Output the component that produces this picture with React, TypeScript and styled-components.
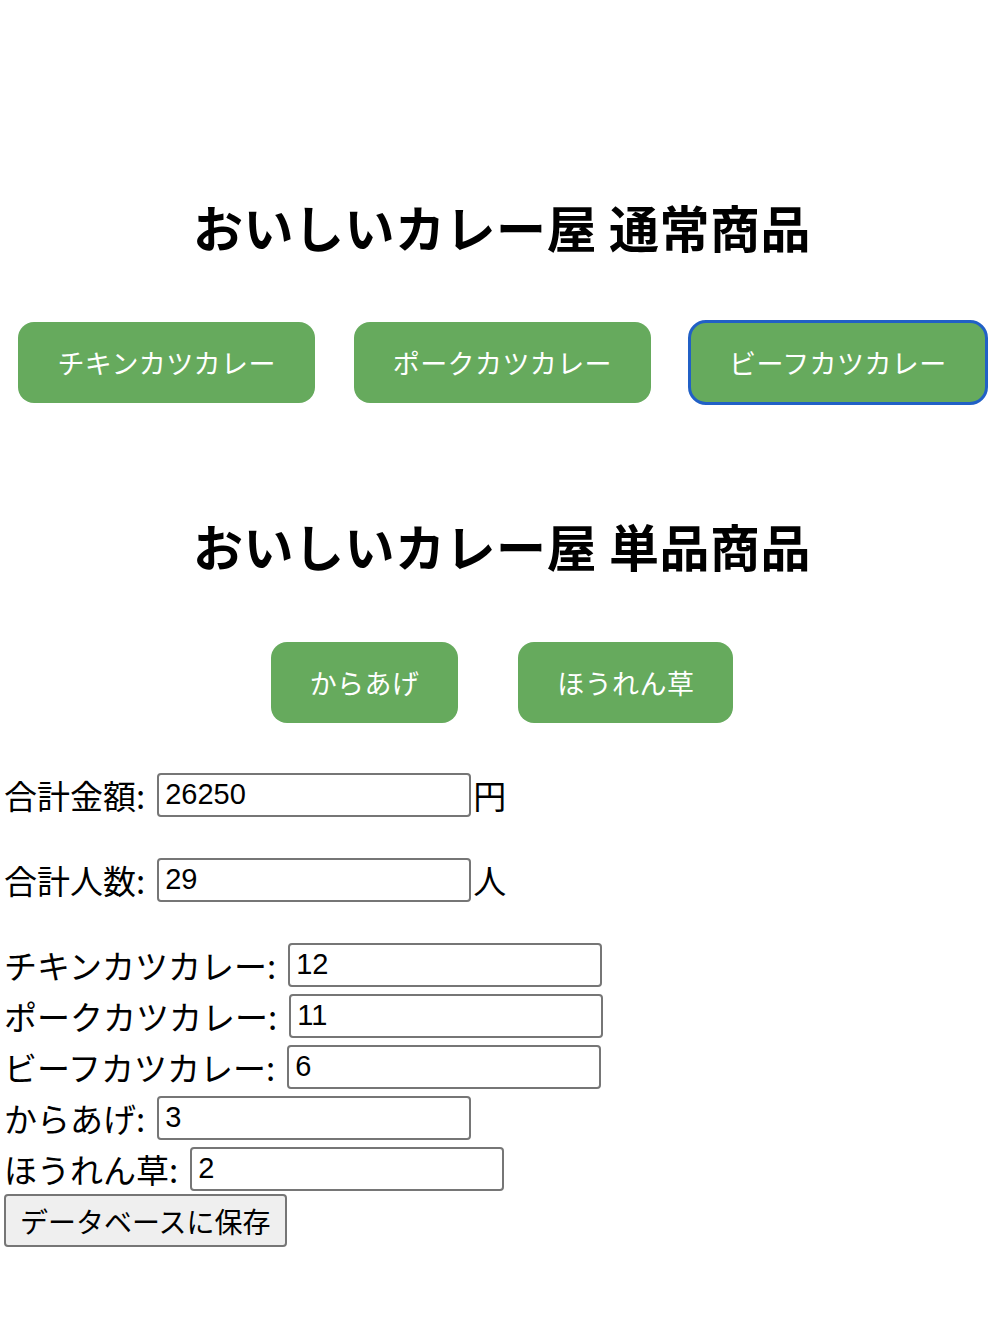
import React, { useState } from 'react';
import styled, { createGlobalStyle } from 'styled-components';

const GlobalStyle = createGlobalStyle`
    body {
        margin: 0;
        background: #ffffff;
        color: #000000;
        font-family: "Liberation Sans", "Noto Sans CJK JP", sans-serif;
    }
`;

const Page = styled.div`
    padding: 191px 0 40px 4px;
    box-sizing: border-box;
`;

const Heading = styled.h2`
    margin: 0;
    text-align: center;
    font-family: "Noto Sans CJK JP", sans-serif;
    font-size: 50px;
    font-weight: 700;
    line-height: 70px;
    letter-spacing: 0.5px;
`;

const ButtonRow = styled.div<{ $gap: number; $top: number; $bottom: number }>`
    display: flex;
    justify-content: center;
    gap: ${p => p.$gap}px;
    margin: ${p => p.$top}px 0 ${p => p.$bottom}px;
`;

const MenuButton = styled.button<{ $focused?: boolean }>`
    height: 81px;
    padding: 0 39px;
    border: none;
    border-radius: 16px;
    background: #66aa5d;
    color: #ffffff;
    font-family: "Noto Sans CJK JP", sans-serif;
    font-size: 27px;
    letter-spacing: 0.4px;
    cursor: pointer;
    outline: ${p => (p.$focused ? '3px solid #2160c6' : 'none')};
    outline-offset: -1px;
`;

const Form = styled.div`
    display: flex;
    flex-direction: column;
    font-family: "Noto Sans CJK JP", sans-serif;
    font-size: 33px;
`;

const Row = styled.div<{ $gap?: number }>`
    display: flex;
    align-items: center;
    height: 51px;
    margin-bottom: ${p => p.$gap ?? 0}px;
    white-space: nowrap;
`;

const Label = styled.span`
    margin-right: 12px;
`;

const NumberInput = styled.input`
    width: 314px;
    height: 44px;
    box-sizing: border-box;
    padding: 0 6px;
    border: 2px solid #767676;
    border-radius: 4px;
    font-family: "Liberation Sans", Arial, sans-serif;
    font-size: 29px;
    color: #000000;
    background: #ffffff;
`;

const Unit = styled.span`
    margin-left: 2px;
`;

const SaveButton = styled.button`
    align-self: flex-start;
    height: 53px;
    padding: 0 14px;
    border: 2px solid #767676;
    border-radius: 4px;
    background: #efefef;
    color: #000000;
    font-family: "Noto Sans CJK JP", sans-serif;
    font-size: 28px;
`;

const regular = ['チキンカツカレー', 'ポークカツカレー', 'ビーフカツカレー'];
const single = ['からあげ', 'ほうれん草'];

export default function App() {
    const [counts] = useState<Record<string, string>>({
        チキンカツカレー: '12',
        ポークカツカレー: '11',
        ビーフカツカレー: '6',
        からあげ: '3',
        ほうれん草: '2',
    });

    return (
        <>
            <GlobalStyle />
            <Page>
                <Heading>おいしいカレー屋 通常商品</Heading>
                <ButtonRow $gap={39} $top={61} $bottom={107}>
                    {regular.map((name, i) => (
                        <MenuButton key={name} $focused={i === 2}>
                            {name}
                        </MenuButton>
                    ))}
                </ButtonRow>
                <Heading>おいしいカレー屋 単品商品</Heading>
                <ButtonRow $gap={60} $top={62} $bottom={46}>
                    {single.map(name => (
                        <MenuButton key={name}>{name}</MenuButton>
                    ))}
                </ButtonRow>
                <Form>
                    <Row $gap={34}>
                        <Label>合計金額:</Label>
                        <NumberInput defaultValue="26250" />
                        <Unit>円</Unit>
                    </Row>
                    <Row $gap={34}>
                        <Label>合計人数:</Label>
                        <NumberInput defaultValue="29" />
                        <Unit>人</Unit>
                    </Row>
                    {[...regular, ...single].map(name => (
                        <Row key={name}>
                            <Label>{name}:</Label>
                            <NumberInput defaultValue={counts[name]} />
                        </Row>
                    ))}
                    <SaveButton>データベースに保存</SaveButton>
                </Form>
            </Page>
        </>
    );
}
